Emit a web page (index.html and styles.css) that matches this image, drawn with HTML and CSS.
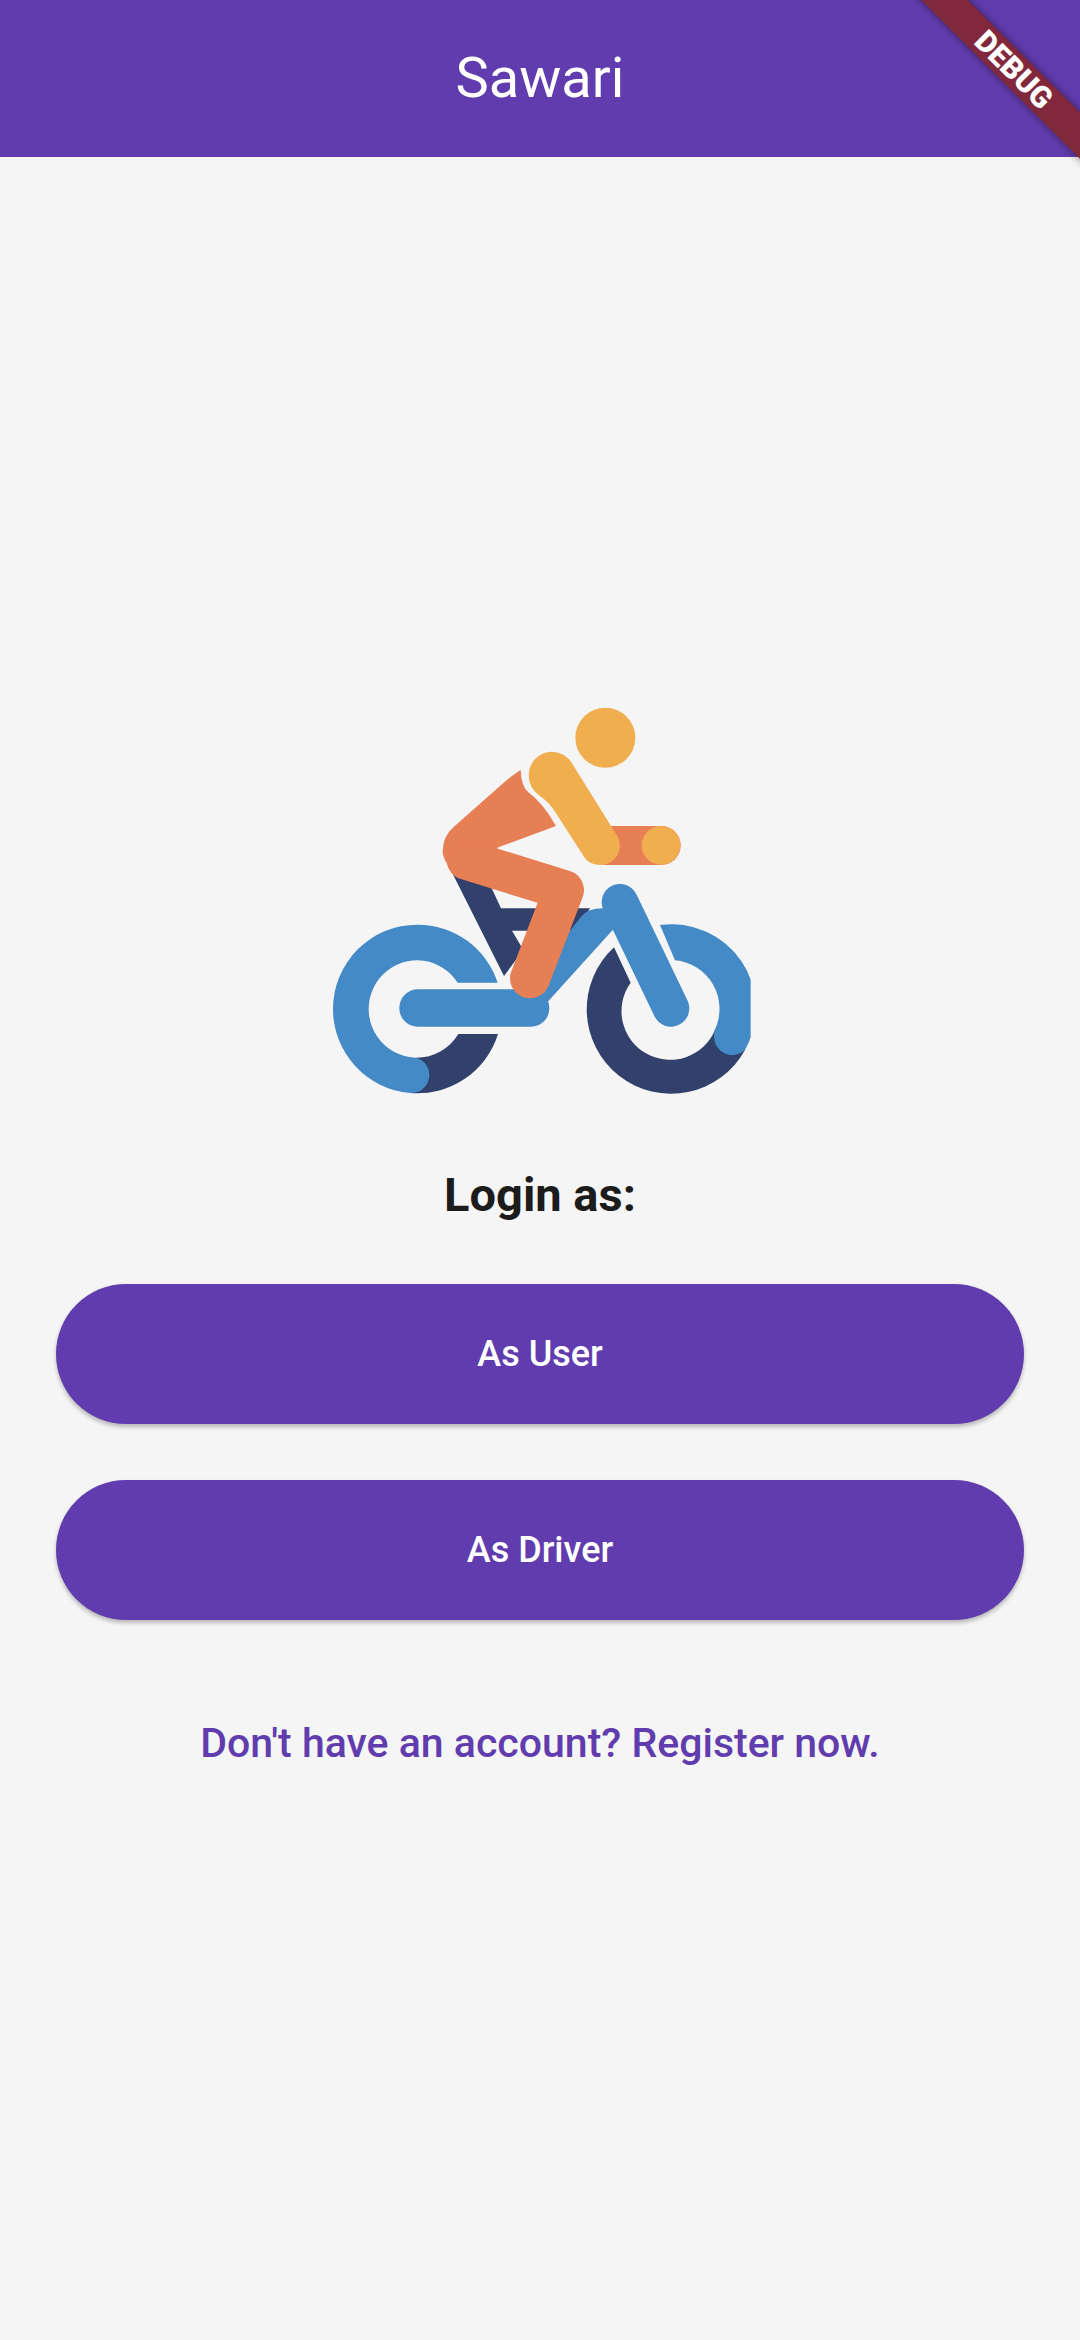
FILE: index.html
```html
<!DOCTYPE html>
<html lang="en">
<head>
    <title>Sawari</title>
    <link rel="stylesheet" href="styles.css">
</head>
<body>
    <div class="app">
        <header class="appbar">Sawari</header>
        <main class="login">
            <svg class="logo" viewBox="0 0 1380 1260" role="img" aria-label="Cyclist logo">
                <defs>
                    <clipPath id="logo-clip"><rect x="0" y="0" width="1322" height="1260"/></clipPath>
                </defs>
                <g clip-path="url(#logo-clip)">
                    <!-- back frame -->
                    <path class="navy" d="M425 545L582 858L640 780L606 722L800 722L840 655L573 655L545 595Z"/>
                    <!-- left wheel -->
                    <path class="navy" d="M564 1032A253 253 0 0 1 300 1209L318 1103A146 146 0 0 0 445 1032Z"/>
                    <path class="blue" d="M563 878A253 253 0 0 0 322 704A253 253 0 0 0 69 957A253 253 0 0 0 300 1209A54 54 0 0 0 318 1103A146 146 0 0 1 176 957A146 146 0 0 1 322 811A146 146 0 0 1 443 878Z"/>
                    <!-- right wheel -->
                    <path class="navy" d="M912 772A253 253 0 1 0 1305 1080L1215 1020A146 146 0 1 1 962 878Z"/>
                    <path class="blue" d="M1050 705A253 253 0 0 1 1305 1080A55 55 0 0 1 1212 1040L1214 1020A146 146 0 0 0 1095 811Z"/>
                    <!-- main frame -->
                    <path class="blue" d="M640 900L812 682Q830 655 880 655L930 680L910 718L718 930L700 950L640 950Z"/>
                    <rect class="blue" x="268" y="898" width="450" height="112" rx="55"/>
                    <path class="fork" d="M930 637L1083 955"/>
                    <!-- rider -->
                    <rect class="orange" x="830" y="408" width="282" height="117" rx="58"/>
                    <path class="orange" d="M632 240Q634 290 655 307Q700 340 738 408L565 472L500 545L430 545Q398 510 398 485Q398 440 430 412L570 288Q600 260 632 240Z"/>
                    <path class="leg" d="M470 510L762 600L660 865"/>
                    <circle class="yellow" cx="1053" cy="466" r="58"/>
                    <path class="yellow" d="M656 255A70 70 0 0 1 785 218L918 432A58 58 0 0 1 870 525Q840 525 825 505L735 365Q715 335 690 318Q656 295 656 255Z"/>
                    <circle class="yellow" cx="886" cy="143" r="90"/>
                </g>
            </svg>
            <h2 class="login-title">Login as:</h2>
            <button class="pill">As User</button>
            <button class="pill">As Driver</button>
            <a class="register" href="#">Don't have an account? Register now.</a>
        </main>
        <div class="debug-ribbon"><span>DEBUG</span></div>
    </div>
</body>
</html>
```

FILE: styles.css
```css
html, body {
    margin: 0;
    padding: 0;
}
body {
    font-family: Roboto, "Noto Sans", sans-serif;
    background-color: #f5f5f5;
}
.app {
    position: relative;
    overflow: hidden;
    width: 1080px;
    height: 2340px;
}
.appbar {
    height: 157px;
    line-height: 157px;
    text-align: center;
    font-size: 56px;
    color: #fff;
    background-color: #613cae;
}
.login {
    display: flex;
    flex-direction: column;
    align-items: center;
    padding: 533px 56px 0;
}
.logo {
    display: block;
    width: 460px;
    height: 420px;
    flex: none;
}
.blue { fill: #448ac6; }
.navy { fill: #32416b; }
.orange { fill: #e77f55; }
.yellow { fill: #f0ae4f; }
.fork {
    fill: none;
    stroke: #448ac6;
    stroke-width: 110;
    stroke-linecap: round;
}
.leg {
    fill: none;
    stroke: #e77f55;
    stroke-width: 120;
    stroke-linecap: round;
    stroke-linejoin: round;
}
.login-title {
    margin: 53px 0 0;
    height: 64px;
    line-height: 64px;
    font-size: 47px;
    font-weight: 700;
    color: #1c1c1c;
}
.pill {
    display: block;
    width: 968px;
    height: 140px;
    margin-top: 56px;
    border: none;
    border-radius: 70px;
    font-family: inherit;
    font-size: 36px;
    font-weight: 500;
    color: #fff;
    background-color: #613cae;
    box-shadow: 0 3px 4px rgba(0, 0, 0, 0.25);
}
.login-title + .pill {
    margin-top: 57px;
}
.register {
    margin-top: 96px;
    font-size: 41px;
    line-height: 54px;
    font-weight: 500;
    color: #613cae;
    text-decoration: none;
}
.debug-ribbon {
    position: absolute;
    top: 69px;
    left: 1014px;
    width: 300px;
    height: 33px;
    margin: -16.5px 0 0 -150px;
    line-height: 33px;
    text-align: center;
    background-color: #82283c;
    box-shadow: 0 0 8px rgba(0, 0, 0, 0.45);
    transform: rotate(45deg);
}
.debug-ribbon span {
    font-size: 30px;
    font-weight: 900;
    color: #fff;
}
```
